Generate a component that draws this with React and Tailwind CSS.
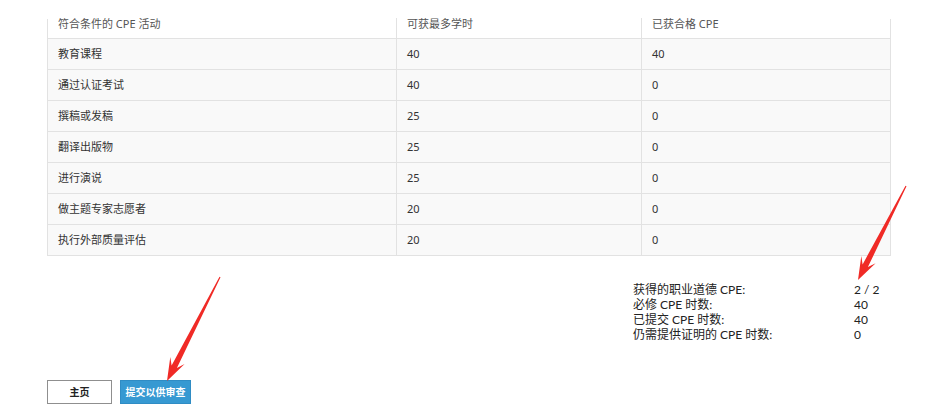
import React from 'react';

const rows = [
  { name: '教育课程', max: 40, earned: 40 },
  { name: '通过认证考试', max: 40, earned: 0 },
  { name: '撰稿或发稿', max: 25, earned: 0 },
  { name: '翻译出版物', max: 25, earned: 0 },
  { name: '进行演说', max: 25, earned: 0 },
  { name: '做主题专家志愿者', max: 20, earned: 0 },
  { name: '执行外部质量评估', max: 20, earned: 0 },
];

const summary = [
  ['获得的职业道德 CPE:', '2 / 2'],
  ['必修 CPE 时数:', '40'],
  ['已提交 CPE 时数:', '40'],
  ['仍需提供证明的 CPE 时数:', '0'],
];

// tapered red arrow, thin at the start and a notched head at the tip
const arrowPoints = (sx, sy, tx, ty) => {
  const dx = tx - sx;
  const dy = ty - sy;
  const len = Math.hypot(dx, dy);
  const ux = dx / len;
  const uy = dy / len;
  const nx = -uy;
  const ny = ux;
  const at = (back, side) => [tx - back * ux + side * nx, ty - back * uy + side * ny];
  const pts = [
    [sx + 0.6 * nx, sy + 0.6 * ny],
    at(16, 3),
    at(23, 8),
    [tx, ty],
    at(23, -8),
    at(16, -3),
    [sx - 0.6 * nx, sy - 0.6 * ny],
  ];
  return pts.map((p) => p.map((v) => v.toFixed(1)).join(',')).join(' ');
};

const App = () => {
  return (
    <div className="relative w-[937px] h-[415px] bg-white overflow-hidden font-['Noto_Sans','Noto_Sans_CJK_SC',sans-serif]">
      {/* Table */}
      <div className="ml-[47px] mt-[19px] w-[844px] border-x border-[#e2e2e2] text-[11px]">
        <div className="grid grid-cols-[348px_245px_1fr] h-[20px] bg-white border-b border-[#e2e2e2] text-[#555]">
          <div className="pl-[10px] leading-[12px] -mt-px">符合条件的 CPE 活动</div>
          <div className="pl-[10px] leading-[12px] -mt-px border-l border-[#e2e2e2]">可获最多学时</div>
          <div className="pl-[10px] leading-[12px] -mt-px border-l border-[#e2e2e2]">已获合格 CPE</div>
        </div>
        {rows.map((r) => (
          <div key={r.name} className="grid grid-cols-[348px_245px_1fr] h-[31px] bg-[#f9f9f9] border-b border-[#e2e2e2] text-[#333]">
            <div className="pl-[10px] flex items-center">{r.name}</div>
            <div className="pl-[10px] flex items-center border-l border-[#e2e2e2]">{r.max}</div>
            <div className="pl-[10px] flex items-center border-l border-[#e2e2e2]">{r.earned}</div>
          </div>
        ))}
      </div>

      {/* Summary */}
      <div className="ml-[633px] mt-[26px] grid grid-cols-[221px_60px] text-[12px] leading-[15px] text-[#222] font-['Lato','Noto_Sans_CJK_SC',sans-serif]">
        {summary.map(([label, value]) => (
          <React.Fragment key={label}>
            <div className="h-[15px]">{label}</div>
            <div className="h-[15px]">{value}</div>
          </React.Fragment>
        ))}
      </div>

      {/* Buttons */}
      <div className="ml-[47px] mt-[38px] flex gap-[8px]">
        <button className="w-[65px] h-[24px] border border-[#8f8f8f] bg-white text-[10px] font-bold text-[#222]">
          主页
        </button>
        <button className="w-[71px] h-[24px] border border-[#2f8cc4] bg-[#3699d2] text-[10px] font-bold text-white">
          提交以供审查
        </button>
      </div>

      {/* Annotation arrows */}
      <svg className="absolute inset-0 pointer-events-none" width="937" height="415">
        <polygon points={arrowPoints(906, 186, 858, 280)} fill="#f02a26" />
        <polygon points={arrowPoints(220, 277, 167, 381)} fill="#f02a26" />
      </svg>
    </div>
  );
};

export default App;
